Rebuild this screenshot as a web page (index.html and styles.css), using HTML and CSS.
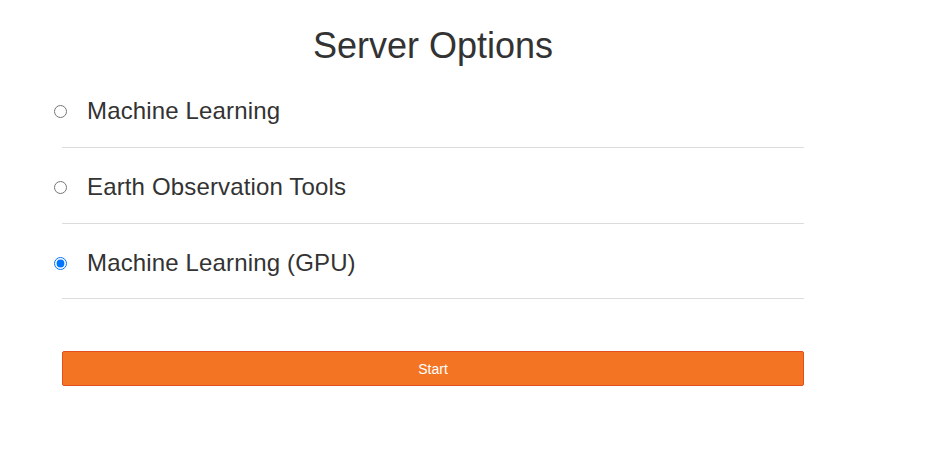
FILE: index.html
```html
<!DOCTYPE html>
<html>
<head>
<meta charset="utf-8">
<link rel="stylesheet" href="styles.css">
</head>
<body>
<div class="page">
  <h1 class="title">Server Options</h1>
  <form class="options">
    <label class="option"><input type="radio" name="profile" class="radio"><span>Machine Learning</span></label>
    <hr class="rule">
    <label class="option"><input type="radio" name="profile" class="radio"><span>Earth Observation Tools</span></label>
    <hr class="rule">
    <label class="option"><input type="radio" name="profile" class="radio" checked><span>Machine Learning (GPU)</span></label>
    <hr class="rule">
    <button type="button" class="start">Start</button>
  </form>
</div>
</body>
</html>
```
FILE: styles.css
```css
html, body {
  margin: 0;
  padding: 0;
  background: #fff;
}
body {
  font-family: "Liberation Sans", Arial, sans-serif;
  color: #333;
}
.page {
  width: 742px;
  padding-left: 62px;
  padding-top: 26px;
}
.title {
  margin: 0;
  font-size: 36px;
  font-weight: 400;
  line-height: 40px;
  text-align: center;
}
.options {
  margin-top: 31px;
  display: flex;
  flex-direction: column;
}
.option {
  display: flex;
  align-items: center;
  gap: 20px;
  margin-left: -8px;
  height: 28px;
  font-size: 24px;
  line-height: 28px;
  letter-spacing: 0.15px;
  cursor: pointer;
}
.radio {
  margin: 0;
  width: 13px;
  height: 13px;
}
.rule {
  margin: 22px 0 25px;
  border: 0;
  border-top: 1px solid #dcdcdc;
  height: 0;
}
.rule:last-of-type {
  margin-top: 21px;
  margin-bottom: 52px;
}
.start {
  display: block;
  width: 742px;
  height: 35px;
  padding: 6px 12px;
  font-family: "Liberation Sans", Arial, sans-serif;
  font-size: 14px;
  line-height: 20px;
  color: #fff;
  background: #f37524;
  border: 1px solid #e34f21;
  border-radius: 2px;
  cursor: pointer;
}
```
